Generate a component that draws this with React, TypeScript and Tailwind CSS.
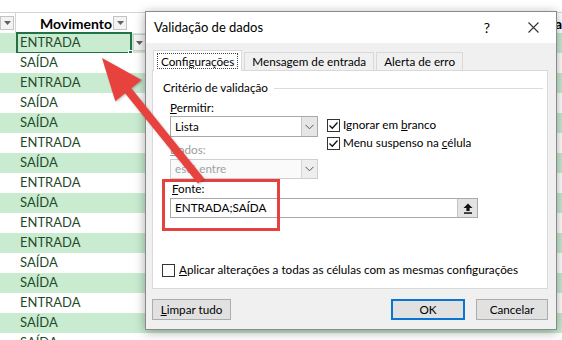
import React from "react";

const rows = [
  "ENTRADA",
  "SAÍDA",
  "ENTRADA",
  "SAÍDA",
  "SAÍDA",
  "ENTRADA",
  "SAÍDA",
  "ENTRADA",
  "SAÍDA",
  "ENTRADA",
  "ENTRADA",
  "SAÍDA",
  "SAÍDA",
  "ENTRADA",
  "SAÍDA",
  "SAÍDA",
];

const FilterButton = () => (
  <div className="w-[14px] h-[14px] border border-[#c3c3c3] bg-[#f3f3f3] flex items-center justify-center">
    <svg width="7" height="4" viewBox="0 0 7 4">
      <path d="M0 0 L7 0 L3.5 4 Z" fill="#606060" />
    </svg>
  </div>
);

const Chevron = () => (
  <svg width="9" height="6" viewBox="0 0 9 6">
    <path d="M0.5 0.8 L4.5 4.8 L8.5 0.8" stroke="#555" strokeWidth="1" fill="none" />
  </svg>
);

const Checkbox = ({ checked }: { checked?: boolean }) => (
  <div className="w-[13px] h-[13px] border border-[#333] bg-white flex items-center justify-center shrink-0">
    {checked && (
      <svg width="11" height="11" viewBox="0 0 11 11">
        <path d="M1.5 5.5 L4.3 8.3 L9.5 2.5" stroke="#111" strokeWidth="1.3" fill="none" />
      </svg>
    )}
  </div>
);

const Select = ({ value, disabled }: { value: string; disabled?: boolean }) => (
  <div
    className={`flex items-stretch border ${
      disabled ? "border-[#cfcfcf] bg-[#fafafa] text-[#a3a3a3]" : "border-[#a9a9a9] bg-white"
    } h-full`}
  >
    <div className="flex-1 flex items-center pl-[4px]">{value}</div>
    <div
      className={`w-[16px] flex items-center justify-center border-l ${
        disabled ? "border-[#d6d6d6] bg-[#eeeeee]" : "border-[#c4c4c4] bg-[#e6e6e6]"
      }`}
    >
      <Chevron />
    </div>
  </div>
);

const Sheet = () => (
  <div className="flex flex-col font-['Lato',sans-serif] text-[13px] text-[#1f4a2a]">
    <div className="h-[13px] border-b border-[#d4d4d4] bg-white" />
    <div className="h-[20px] flex items-center bg-white text-[14px]">
      <div className="w-[16px] h-full flex items-center justify-end pr-px border-r border-[#d4d4d4]">
        <FilterButton />
      </div>
      <div className="w-[130px] h-full flex items-center pl-[24px] font-bold text-black">
        <span className="w-[73px]">Movimento</span>
        <FilterButton />
      </div>
      <div className="flex-1 h-full flex items-center pl-[402px] font-bold text-black">Da</div>
    </div>
    {rows.map((r, i) => (
      <div
        key={i}
        className={`relative h-[20px] flex items-center ${i % 2 === 0 ? "bg-[#c9ecd1]" : "bg-white"}`}
      >
        <div className="pl-[20px]">{r}</div>
        {i === 0 && (
          <>
            <div className="absolute left-[16px] top-[-1px] w-[116px] h-[22px] border-2 border-[#217346]">
              <div className="absolute right-[-3px] bottom-[-3px] w-[5px] h-[5px] bg-[#217346] border border-white" />
            </div>
            <div className="absolute left-[133px] top-[1px] w-[13px] h-[17px] bg-[#f4f4f4] border border-[#d0d0d0] flex items-center justify-center">
              <svg width="7" height="4" viewBox="0 0 7 4">
                <path d="M0 0 L7 0 L3.5 4 Z" fill="#606060" />
              </svg>
            </div>
          </>
        )}
      </div>
    ))}
  </div>
);

const Dialog = () => (
  <div className="absolute left-[145px] top-[11px] w-[412px] h-[319px] border border-[#8a8a8a] bg-[#f0f0f0] flex flex-col shadow-[0_2px_10px_rgba(0,0,0,0.35)] font-['Lato',sans-serif] text-[11.7px] text-black">
    <div className="h-[31px] bg-white flex items-center">
      <span className="pl-[8px] text-[13px]">Validação de dados</span>
      <span className="ml-auto w-[46px] text-center text-[14px]">?</span>
      <div className="w-[46px] flex items-center justify-center">
        <svg width="11" height="11" viewBox="0 0 11 11">
          <path d="M0.5 0.5 L10.5 10.5 M10.5 0.5 L0.5 10.5" stroke="#333" strokeWidth="1.1" />
        </svg>
      </div>
    </div>

    <div className="flex-1 flex flex-col pl-[6px] pr-[8px] pt-[7px]">
      {/* Tabs */}
      <div className="h-[20px] flex items-end gap-[2px] pl-px">
        <div className="relative z-10 -mb-px h-[21px] bg-white border border-b-0 border-[#d9d9d9] px-[3px] flex items-center">
          <span className="border border-dotted border-[#444] px-[3px] leading-[14px]">Configurações</span>
        </div>
        <div className="h-[18px] border border-b-0 border-[#d9d9d9] bg-[#f0f0f0] px-[7px] flex items-center">
          Mensagem de entrada
        </div>
        <div className="h-[18px] border border-b-0 border-[#d9d9d9] bg-[#f0f0f0] px-[7px] flex items-center">
          Alerta de erro
        </div>
      </div>

      {/* Panel */}
      <div className="h-[219px] bg-white border border-[#d9d9d9] pl-[9px] pt-[9px] flex flex-col">
        <div className="h-[16px] flex items-center pl-px pr-[4px]">
          <span>Critério de validação</span>
          <div className="flex-1 h-px bg-[#dcdcdc] ml-[6px]" />
        </div>

        <div className="pl-[8px] mt-[4px] flex flex-col">
          <div className="flex">
            <div className="w-[148px] flex flex-col">
              <div className="h-[16px] flex items-center">
                <span>
                  <span className="underline">P</span>ermitir:
                </span>
              </div>
              <div className="h-[21px]">
                <Select value="Lista" />
              </div>
              <div className="h-[16px] mt-[5px] flex items-center text-[#9c9c9c]">
                <span>
                  <span className="underline">D</span>ados:
                </span>
              </div>
              <div className="h-[20px] mt-px">
                <Select value="está entre" disabled />
              </div>
            </div>
            <div className="ml-[9px] pt-[16px] flex flex-col">
              <div className="h-[18px] flex items-center gap-[3px]">
                <Checkbox checked />
                <span>
                  Ignorar em <span className="underline">b</span>ranco
                </span>
              </div>
              <div className="h-[18px] flex items-center gap-[3px]">
                <Checkbox checked />
                <span>
                  Menu suspenso na <span className="underline">c</span>élula
                </span>
              </div>
            </div>
          </div>

          <div className="h-[16px] mt-[2px] flex items-center pl-[2px]">
            <span>
              <span className="underline">F</span>onte:
            </span>
          </div>
          <div className="h-[20px] mt-px w-[308px] border border-[#a9a9a9] flex items-stretch">
            <div className="flex-1 flex items-center pl-[4px]">ENTRADA;SAÍDA</div>
            <div className="w-[20px] bg-[#e3e3e3] border-l border-[#c4c4c4] flex items-center justify-center">
              <svg width="10" height="11" viewBox="0 0 10 11">
                <path d="M5 0.5 L9.5 5 L6.6 5 L6.6 8 L3.4 8 L3.4 5 L0.5 5 Z" fill="#111" />
                <rect x="1" y="9.3" width="8" height="1.5" fill="#111" />
              </svg>
            </div>
          </div>
        </div>

        <div className="mt-[44px] h-[16px] flex items-center gap-[4px]">
          <Checkbox />
          <span>
            <span className="underline">A</span>plicar alterações a todas as células com as mesmas configurações
          </span>
        </div>
      </div>

      {/* Buttons */}
      <div className="mt-[10px] flex">
        <button className="w-[79px] h-[21px] bg-[#e1e1e1] border border-[#adadad]">
          <span className="underline">L</span>impar tudo
        </button>
        <button className="ml-auto w-[74px] h-[21px] bg-[#e1e1e1] border-2 border-[#0a74d2]">OK</button>
        <button className="ml-[11px] w-[72px] h-[21px] bg-[#e1e1e1] border border-[#adadad]">Cancelar</button>
      </div>
    </div>
  </div>
);

export default function App() {
  return (
    <div className="relative w-[562px] h-[340px] overflow-hidden bg-white">
      <Sheet />
      <Dialog />

      {/* Highlight box */}
      <div className="absolute left-[162px] top-[179px] w-[118px] h-[52px] border-[3px] border-[#e5413f]" />

      {/* Arrow */}
      <svg
        className="absolute left-0 top-0 pointer-events-none drop-shadow-[1px_1px_1px_rgba(0,0,0,0.25)]"
        width="562"
        height="340"
        viewBox="0 0 562 340"
      >
        <line x1="126" y1="88" x2="201" y2="181" stroke="#e8423f" strokeWidth="8" />
        <polygon points="102,58 141.7,79.9 115.3,101.3" fill="#e8423f" />
      </svg>
    </div>
  );
}
